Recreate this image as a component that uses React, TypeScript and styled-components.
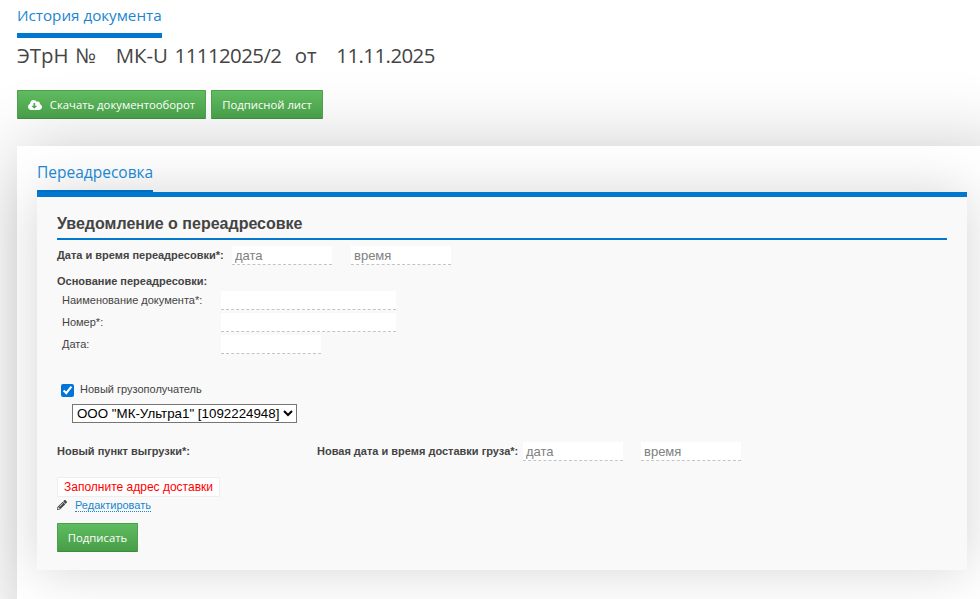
import React from 'react'
import styled, { createGlobalStyle } from 'styled-components'
import { FaCloudDownloadAlt, FaPencilAlt } from 'react-icons/fa'

const GlobalStyle = createGlobalStyle`
  html, body {
    margin: 0;
    height: 100%;
    overflow: hidden;
    background: #fff;
    font-family: "Liberation Sans", Arial, sans-serif;
    color: #444;
  }
`

const Page = styled.div`
  width: 980px;
  height: 599px;
  overflow: hidden;
  padding-left: 17px;
  box-sizing: border-box;
`

const TopTab = styled.div`
  width: 145px;
  padding-top: 5px;
  height: 28px;
  border-bottom: 5px solid #0078d0;
  color: #1a86d0;
  font: 15.2px/20px "Open Sans", sans-serif;
  white-space: nowrap;
`

const DocTitle = styled.h1`
  margin: 5px 0 0;
  height: 25px;
  color: #444;
  font: 400 20.4px/24px "Open Sans", sans-serif;
  word-spacing: 1.3px;
  white-space: pre;
`

const Digits = styled.span`
  letter-spacing: -0.55px;
`

const Buttons = styled.div`
  display: flex;
  gap: 5px;
  margin-top: 22px;
`

const GreenButton = styled.button<{ $width: number }>`
  display: flex;
  align-items: center;
  justify-content: center;
  gap: 8px;
  width: ${(p) => p.$width}px;
  height: 29px;
  padding: 0;
  border: 1px solid #4f9f4f;
  border-bottom-color: #3f8a3f;
  border-radius: 1px;
  background: linear-gradient(#60bc60, #479d47);
  color: #fff;
  font: 11.3px "Open Sans", sans-serif;
`

const Card = styled.div`
  margin-top: 27px;
  width: 1000px;
  height: 500px;
  padding: 0 20px;
  box-sizing: border-box;
  background: #fff;
  box-shadow: 0 0 70px rgba(0, 0, 0, 0.2);
`

const TabRow = styled.div`
  height: 51px;
  width: 930px;
`

const ActiveTab = styled.div`
  padding-top: 16px;
  width: 116px;
  height: 28px;
  border-bottom: 7px solid #0078d0;
  color: #1a86d0;
  font: 15.5px/20px "Open Sans", sans-serif;
  white-space: nowrap;
`

const Panel = styled.div`
  margin-top: -5px;
  width: 930px;
  height: 378px;
  padding: 0 20px;
  box-sizing: border-box;
  background: #f9f9f9;
  border-top: 5px solid #0078d0;
  box-shadow: 0 0 50px rgba(0, 0, 0, 0.17);
`

const Heading = styled.h2`
  margin: 0;
  padding-top: 17px;
  height: 24px;
  border-bottom: 2px solid #0078d0;
  color: #444;
  font: 700 16px/20px "Liberation Sans", sans-serif;
`

const Line = styled.div<{ $top: number; $left?: number }>`
  display: flex;
  align-items: flex-start;
  margin-top: ${(p) => p.$top}px;
  padding-left: ${(p) => p.$left ?? 0}px;
`

const BoldLabel = styled.label<{ $width?: number }>`
  flex: none;
  width: ${(p) => (p.$width ? `${p.$width}px` : 'auto')};
  font: 700 11px/19px "Liberation Sans", sans-serif;
  color: #444;
  white-space: nowrap;
`

const PlainLabel = styled.label`
  flex: none;
  width: 159px;
  font: 11px/19px "Liberation Sans", sans-serif;
  color: #444;
`

const Field = styled.input<{ $width: number; $gap?: number }>`
  width: ${(p) => p.$width}px;
  height: 19px;
  margin-left: ${(p) => p.$gap ?? 0}px;
  padding: 0 3px;
  box-sizing: border-box;
  border: 0;
  border-bottom: 1px dashed #c4c4c4;
  background: #fff;
  font: 13px "Liberation Sans", sans-serif;
  color: #666;
  outline: none;

  &::placeholder {
    color: #808080;
    opacity: 1;
  }
`

const CheckRow = styled.div`
  display: flex;
  align-items: flex-start;
  margin-top: 30px;
  padding-left: 4px;
  height: 13px;
`

const Check = styled.input`
  width: 13px;
  height: 13px;
  margin: 0 6px 0 0;
  accent-color: #0075d8;
`

const CheckLabel = styled.label`
  margin-top: -2px;
  font: 11px/15px "Liberation Sans", sans-serif;
  color: #444;
`

const ConsigneeSelect = styled.select`
  display: block;
  width: 225px;
  height: 19px;
  margin: 7px 0 0 15px;
  font: 13.33px "Liberation Sans", sans-serif;
  color: #000;
  background: #fff;
`

const AddressBox = styled.div`
  width: 163px;
  height: 20px;
  margin-top: 16px;
  box-sizing: border-box;
  border: 1px solid #eee;
  background: #fff;
  color: #f00;
  text-align: center;
  font: 12px/18px "Liberation Sans", sans-serif;
`

const EditRow = styled.div`
  display: flex;
  align-items: center;
  gap: 8px;
  margin-top: 1px;
  height: 14px;
  color: #444;
`

const EditLink = styled.a`
  color: #1a86d0;
  border-bottom: 1px dotted #1a86d0;
  font: 11px/12px "Liberation Sans", sans-serif;
`

const SignRow = styled.div`
  margin-top: 11px;
`

export default function App() {
  return (
    <Page>
      <GlobalStyle />
      <TopTab>История документа</TopTab>
      <DocTitle>
        {'ЭТрН №   МК-U '}
        <Digits>11112025/2</Digits>
        {'  от   '}
        <Digits>11.11.2025</Digits>
      </DocTitle>
      <Buttons>
        <GreenButton $width={189}>
          <FaCloudDownloadAlt size={14} />
          Скачать документооборот
        </GreenButton>
        <GreenButton $width={112}>Подписной лист</GreenButton>
      </Buttons>
      <Card>
        <TabRow>
          <ActiveTab>Переадресовка</ActiveTab>
        </TabRow>
        <Panel>
          <Heading>Уведомление о переадресовке</Heading>
          <Line $top={6}>
            <BoldLabel $width={175}>Дата и время переадресовки*:</BoldLabel>
            <Field $width={100} placeholder="дата" />
            <Field $width={100} $gap={19} placeholder="время" />
          </Line>
          <Line $top={7}>
            <BoldLabel>Основание переадресовки:</BoldLabel>
          </Line>
          <Line $top={0} $left={5}>
            <PlainLabel>Наименование документа*:</PlainLabel>
            <Field $width={175} />
          </Line>
          <Line $top={3} $left={5}>
            <PlainLabel>Номер*:</PlainLabel>
            <Field $width={175} />
          </Line>
          <Line $top={3} $left={5}>
            <PlainLabel>Дата:</PlainLabel>
            <Field $width={100} />
          </Line>
          <CheckRow>
            <Check type="checkbox" defaultChecked />
            <CheckLabel>Новый грузополучатель</CheckLabel>
          </CheckRow>
          <ConsigneeSelect defaultValue="1">
            <option value="1">ООО "МК-Ультра1" [1092224948]</option>
          </ConsigneeSelect>
          <Line $top={19}>
            <BoldLabel $width={260}>Новый пункт выгрузки*:</BoldLabel>
            <BoldLabel $width={206}>Новая дата и время доставки груза*:</BoldLabel>
            <Field $width={100} placeholder="дата" />
            <Field $width={100} $gap={18} placeholder="время" />
          </Line>
          <AddressBox>Заполните адрес доставки</AddressBox>
          <EditRow>
            <FaPencilAlt size={10} />
            <EditLink>Редактировать</EditLink>
          </EditRow>
          <SignRow>
            <GreenButton $width={81}>Подписать</GreenButton>
          </SignRow>
        </Panel>
      </Card>
    </Page>
  )
}
